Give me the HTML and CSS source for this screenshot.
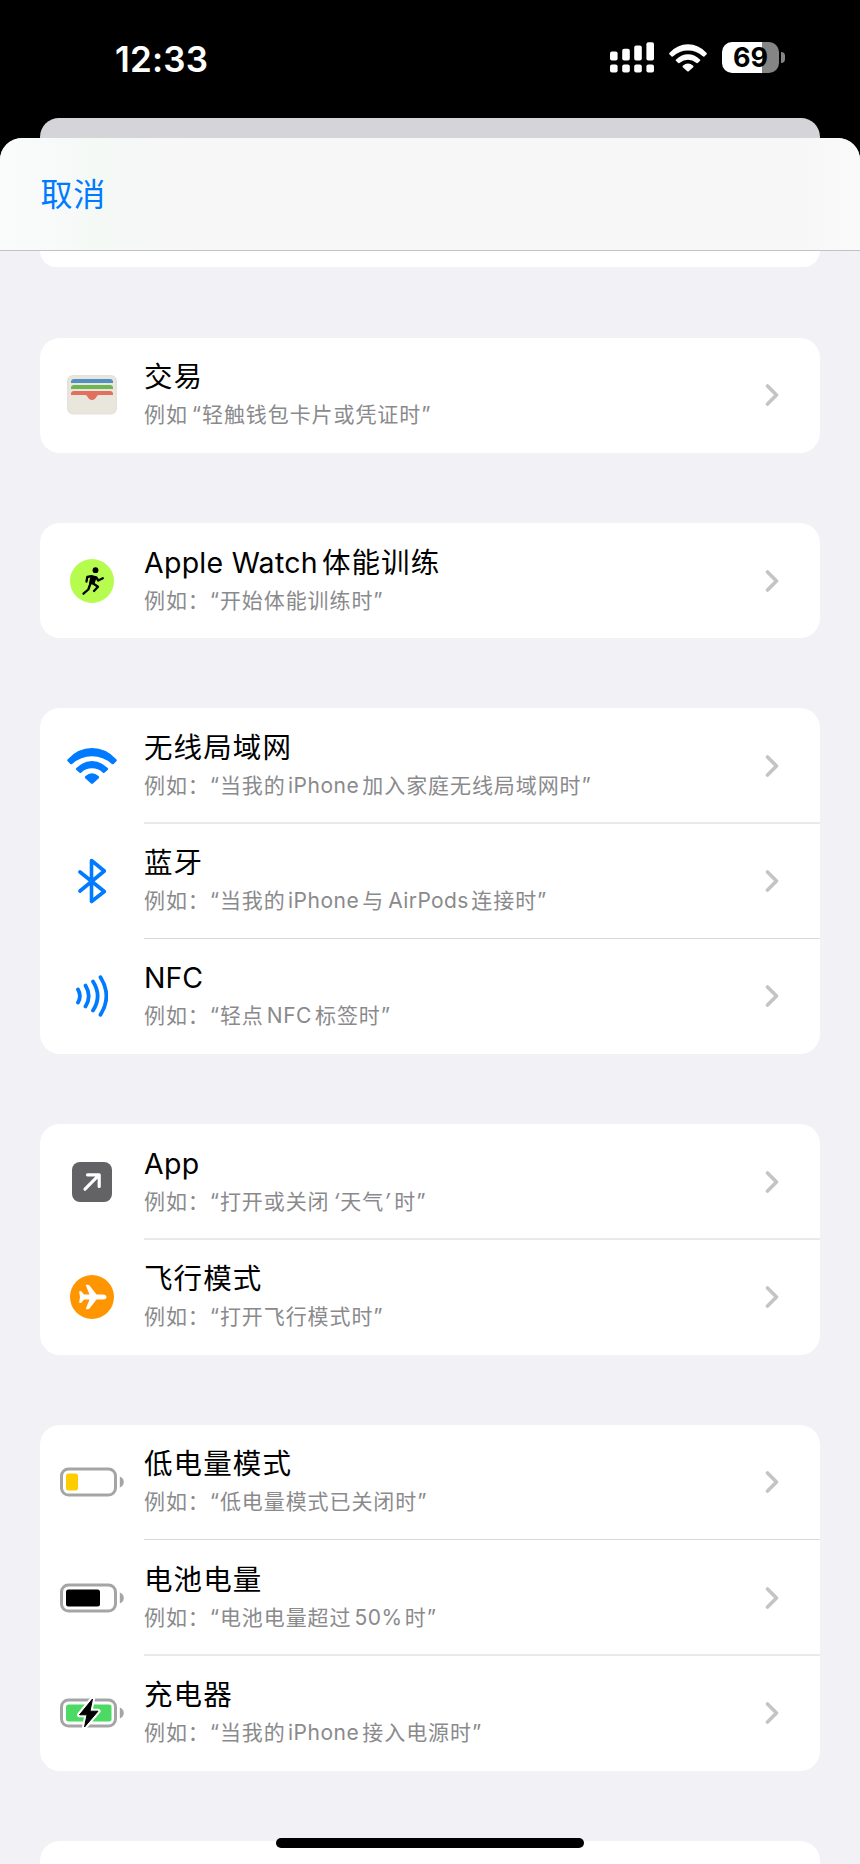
FILE: index.html
```html
<!DOCTYPE html>
<html lang="zh-CN">
<head>
<meta charset="utf-8">
<title>自动化</title>
<link rel="stylesheet" href="styles.css">
</head>
<body>
<div class="phone">
  <header class="status">
    <div class="clock">12:33</div>
    <div class="indicators">
      <svg class="signal" width="44" height="31" viewBox="0 0 44 31" fill="#fff"><rect x="0" y="9.5" width="7.6" height="9" rx="2"/><rect x="12.2" y="6.8" width="7.6" height="11.7" rx="2"/><rect x="24.2" y="3.6" width="7.6" height="14.9" rx="2"/><rect x="36.4" y="0.3" width="7.6" height="18.2" rx="2"/><rect x="0" y="22.6" width="7.6" height="7.8" rx="2"/><rect x="12.2" y="22.6" width="7.6" height="7.8" rx="2"/><rect x="24.2" y="22.6" width="7.6" height="7.8" rx="2"/><rect x="36.4" y="22.6" width="7.6" height="7.8" rx="2"/></svg>
      <svg class="wifi-status" width="38" height="28" viewBox="0 0 50 36"><use href="#wifi" fill="#fff"/></svg>
      <div class="battery"><span class="battery-level">69</span></div>
      <div class="battery-tip"></div>
    </div>
  </header>
  <div class="back-sheet"></div>
  <main class="sheet">
    <nav class="navbar"><a class="cancel">取消</a></nav>
    <div class="card peek"></div>

    <section class="card">
      <div class="row">
        <div class="icon"><svg width="50" height="40" viewBox="0 0 50 40"><rect width="50" height="39.4" rx="6" fill="#e5e3d9"/><rect x="1.5" y="1.5" width="47" height="36.4" rx="5" fill="#e9e7dd"/><path d="M4 8V7q0-3 3-3h36q3 0 3 3v1z" fill="#5290c2"/><path d="M4 14v-1q0-3 3-3h36q3 0 3 3v1z" fill="#6db651"/><path d="M4 20v-1q0-3 3-3h36q3 0 3 3v1H32q-1.500 0-2 1-2 4-5 4t-5-4q-.5-1-2-1z" fill="#e2705f"/></svg></div>
        <div class="text"><h2>交易</h2><p>例如<span class="open">“</span>轻触钱包卡片或凭证时”</p></div>
        <svg class="chev" width="14" height="22" viewBox="0 0 14 22"><path d="M2.500 2l9 9-9 9"/></svg>
      </div>
    </section>

    <section class="card">
      <div class="row">
        <div class="icon"><svg width="44" height="44" viewBox="0 0 44 44"><circle cx="22" cy="22" r="22" fill="#b5fc4f"/><circle cx="25.500" cy="11.200" r="2.900"/><path d="M21.800 17.500l-1.500 6.500 3 .3 2-6z" stroke="#000" stroke-width="2.600" stroke-linejoin="round"/><g fill="none" stroke="#000" stroke-width="2.300" stroke-linecap="round" stroke-linejoin="round"><path d="M21.500 17.200l-4.200.8-.8 4.500"/><path d="M26.300 18.500l2 3 4.500-2.200"/><path d="M20.300 25l-2 5.500-4.800 4.200"/><path d="M23.500 24.700l4.500 3-4 4.300"/></g></svg></div>
        <div class="text"><h2><span class="en-title">Apple Watch</span>体能训练</h2><p>例如：“开始体能训练时”</p></div>
        <svg class="chev" width="14" height="22" viewBox="0 0 14 22"><path d="M2.500 2l9 9-9 9"/></svg>
      </div>
    </section>

    <section class="card">
      <div class="row soft">
        <div class="icon"><svg width="50" height="36" viewBox="0 0 50 36"><path id="wifi" d="M0.800 11.200Q-.4 12.300.8 13.500L3.400 15.900Q4.300 16.800 5.500 15.800Q13.700 8.200 25 8.200T44.500 15.800Q45.700 16.800 46.600 15.900L49.200 13.500Q50.400 12.300 49.200 11.200Q39 0 25 0T.8 11.200ZM9.300 20.100Q8.400 21.100 9.400 22.100L12.200 24.600Q13.300 25.400 14.300 24.400Q19 20.300 25 20.300T35.700 24.400Q36.700 25.400 37.800 24.600L40.600 22.100Q41.600 21.100 40.700 20.100Q33.500 13 25 13T9.300 20.100ZM18.500 28Q17 29.300 18.500 30.500L24 35.500Q25 36.300 26 35.500L31.500 30.500Q33 29.300 31.500 28Q28.500 25.300 25 25.300T18.500 28Z" fill="inherit"/></svg></div>
        <div class="text"><h2>无线局域网</h2><p>例如：“当我的<span class="en">iPhone</span>加入家庭无线局域网时”</p></div>
        <svg class="chev" width="14" height="22" viewBox="0 0 14 22"><path d="M2.500 2l9 9-9 9"/></svg>
      </div>
      <div class="row">
        <div class="icon"><svg width="28" height="46" viewBox="0 0 28 46" fill="none" stroke="#007aff" stroke-width="3.600" stroke-linecap="round" stroke-linejoin="round"><path d="M2 14l24.300 19.500L13.500 43.500V2.500L26.300 13 2 33"/></svg></div>
        <div class="text"><h2>蓝牙</h2><p>例如：“当我的<span class="en">iPhone</span>与<span class="en air">AirPods</span>连接时”</p></div>
        <svg class="chev" width="14" height="22" viewBox="0 0 14 22"><path d="M2.500 2l9 9-9 9"/></svg>
      </div>
      <div class="row">
        <div class="icon"><svg width="32" height="42" viewBox="0 0 32 42" fill="none" stroke="#007aff" stroke-width="3.800" stroke-linecap="round"><path d="M2 14.500q3.800 6.500 0 13M9.500 10.500q6.500 10.500 0 21M17 6.500q9.300 14.500 0 29M24.500 2.200q11.800 18.800 0 37.600"/></svg></div>
        <div class="text"><h2><span class="nfc">NFC</span></h2><p>例如：“轻点<span class="en nfc-sub">NFC</span>标签时”</p></div>
        <svg class="chev" width="14" height="22" viewBox="0 0 14 22"><path d="M2.500 2l9 9-9 9"/></svg>
      </div>
    </section>

    <section class="card">
      <div class="row soft">
        <div class="icon"><svg width="40" height="40" viewBox="0 0 40 40"><rect width="40" height="40" rx="8" fill="#636365"/><path d="M13 27.200L27 13M15.500 12.800H27.200V24.500" fill="none" stroke="#fff" stroke-width="3.200" stroke-linecap="round" stroke-linejoin="round"/></svg></div>
        <div class="text"><h2><span class="en-title">App</span></h2><p>例如：“打开或关闭<span class="tick">‘</span>天气<span class="tick end">’</span>时”</p></div>
        <svg class="chev" width="14" height="22" viewBox="0 0 14 22"><path d="M2.500 2l9 9-9 9"/></svg>
      </div>
      <div class="row">
        <div class="icon"><svg width="44" height="44" viewBox="0 0 44 44"><circle cx="22" cy="22" r="22" fill="#ff9500"/><path d="M36.500 22q0 2.500-4 2.500H26.500L19.500 33.500Q19 34.300 17.500 34.300H16.800Q15.600 34.300 16 33.200L19.500 24.500H14L11.500 27.500Q11 28 10 28 9 28 9.200 27L10 22 9.200 17Q9 16 10 16 11 16 11.500 16.500L14 19.500H19.500L16 10.800Q15.600 9.700 16.800 9.700H17.500Q19 9.700 19.500 10.500L26.500 19.500H32.500Q36.500 19.500 36.500 22Z" fill="#fff"/></svg></div>
        <div class="text"><h2>飞行模式</h2><p>例如：“打开飞行模式时”</p></div>
        <svg class="chev" width="14" height="22" viewBox="0 0 14 22"><path d="M2.500 2l9 9-9 9"/></svg>
      </div>
    </section>

    <section class="card">
      <div class="row">
        <div class="icon"><svg width="64" height="30" viewBox="0 0 64 30"><rect x="1.500" y="2" width="54" height="26" rx="7" fill="none" stroke="#a5a5a5" stroke-width="3"/><path d="M59.800 9.500q4 1.600 4 5.500t-4 5.500z" fill="#a5a5a5"/><rect x="6" y="6.500" width="12" height="17" rx="2.500" fill="#ffcc00"/></svg></div>
        <div class="text"><h2>低电量模式</h2><p>例如：“低电量模式已关闭时”</p></div>
        <svg class="chev" width="14" height="22" viewBox="0 0 14 22"><path d="M2.500 2l9 9-9 9"/></svg>
      </div>
      <div class="row soft">
        <div class="icon"><svg width="64" height="30" viewBox="0 0 64 30"><rect x="1.500" y="2" width="54" height="26" rx="7" fill="none" stroke="#a5a5a5" stroke-width="3"/><path d="M59.800 9.500q4 1.600 4 5.500t-4 5.500z" fill="#a5a5a5"/><rect x="6" y="6.500" width="34" height="17" rx="2.500"/></svg></div>
        <div class="text"><h2>电池电量</h2><p>例如：“电池电量超过<span class="en percent">50%</span>时”</p></div>
        <svg class="chev" width="14" height="22" viewBox="0 0 14 22"><path d="M2.500 2l9 9-9 9"/></svg>
      </div>
      <div class="row">
        <div class="icon"><svg width="64" height="30" viewBox="0 0 64 30"><rect x="1.500" y="2" width="54" height="26" rx="7" fill="none" stroke="#a5a5a5" stroke-width="3"/><path d="M59.800 9.500q4 1.600 4 5.500t-4 5.500z" fill="#a5a5a5"/><rect x="6" y="6.500" width="45.500" height="17" rx="2.500" fill="#4cd964"/><path d="M32.500 1L19.500 16.800H27L24.500 29 38 13.200H30Z" stroke="#fff" stroke-width="5" stroke-linejoin="round"/><path d="M32.500 1L19.500 16.800H27L24.500 29 38 13.200H30Z" stroke="#000" stroke-width="1" stroke-linejoin="round"/></svg></div>
        <div class="text"><h2>充电器</h2><p>例如：“当我的<span class="en">iPhone</span>接入电源时”</p></div>
        <svg class="chev" width="14" height="22" viewBox="0 0 14 22"><path d="M2.500 2l9 9-9 9"/></svg>
      </div>
    </section>

    <section class="card next"></section>
  </main>
  <div class="home-indicator"></div>
</div>
</body>
</html>
```
FILE: styles.css
```css
* { box-sizing: border-box; }
body { margin: 0; background: #000; font-family: Inter, "Noto Sans CJK SC", sans-serif; }
.phone { position: relative; width: 860px; height: 1864px; overflow: hidden; display: flex; flex-direction: column; background: #000; }
.status { height: 118px; flex: none; display: flex; justify-content: space-between; padding: 42px 75px 0 115px; }
.clock { color: #fff; font-size: 35px; font-weight: 600; line-height: 34px; letter-spacing: .2px; }
.indicators { display: flex; align-items: flex-start; }
.wifi-status { margin: 1.500px 14.500px 0 15px; fill: #fff; }
.battery { width: 57px; height: 30.500px; border-radius: 10px; background: linear-gradient(90deg, #fff 70%, #858585 70%); display: flex; align-items: center; justify-content: center; }
.battery-level { padding: 1px 0 0 1px; font-size: 27px; font-weight: 650; line-height: 30px; color: #000; }
.battery-tip { width: 4px; height: 11px; margin: 10px 0 0 2.500px; border-radius: 0 5px 5px 0; background: #858585; }
.back-sheet { height: 40px; flex: none; margin: 0 40.300px -20px; border-radius: 19px 19px 0 0; background: #d5d5d9; }
.sheet { position: relative; flex: 1; min-height: 0; overflow: hidden; border-radius: 22px 22px 0 0; background: #f1f1f6; }
.navbar { height: 113px; display: flex; align-items: center; padding: 2px 0 0 40.500px; border-bottom: 1px solid #c2c2c4; background: linear-gradient(90deg, #fafcfb 0, #f5f9f6 100px, #f7f7f7 190px, #f7f7f7 800px, #fafafa 100%); }
.cancel { color: #007aff; font-size: 32px; line-height: 40px; letter-spacing: .8px; }
.card { margin: 0 40.300px 70px; border-radius: 20px; background: #fff; overflow: hidden; }
.peek { height: 16px; border-radius: 0 0 20px 20px; margin-bottom: 70.600px; }
.next { height: 60px; margin-bottom: 0; }
.row { position: relative; height: 115.300px; display: flex; align-items: center; padding-right: 41px; }
.row:not(:last-child)::after { content: ""; position: absolute; left: 103.700px; right: 0; bottom: 0; height: 1px; background: #d9d9db; }
.row.soft:not(:last-child)::after { bottom: -1px; height: 2px; background: #e9e9ea; }
.icon { width: 103.700px; flex: none; display: flex; justify-content: center; }
.icon svg { fill: #000; }
.icon svg[viewBox="0 0 50 36"] { fill: #007aff; }
.icon svg[fill="none"] { fill: none; }
.text { flex: 1; padding-top: 1px; white-space: nowrap; }
h2 { margin: 0; font-size: 28.500px; line-height: 38px; font-weight: 400; letter-spacing: 1.100px; color: #000; }
p { margin: 1px 0 0; font-size: 21px; line-height: 36px; letter-spacing: .920px; color: #8a8a8d; }
.en { margin: 0 3px 0 2.200px; letter-spacing: .550px; }
.en.air { margin: 0 2.500px 0 4px; letter-spacing: .4px; }
.en.nfc-sub { margin: 0 3px 0 3px; }
.en.percent { margin: 0 2px 0 3px; }
.en-title { letter-spacing: .270px; margin-right: 4px; }
.nfc { letter-spacing: 0; }
.open { margin-left: 4px; }
.tick { display: inline-block; margin-left: 3.500px; font-style: italic; }
.tick.end { margin: 0 3px 0 0; }
.chev { flex: none; fill: none; stroke: #c4c4c6; stroke-width: 3.600; stroke-linecap: round; stroke-linejoin: round; }
.home-indicator { position: absolute; left: 276px; top: 1838px; width: 308px; height: 10px; border-radius: 5px; background: #000; }
```
